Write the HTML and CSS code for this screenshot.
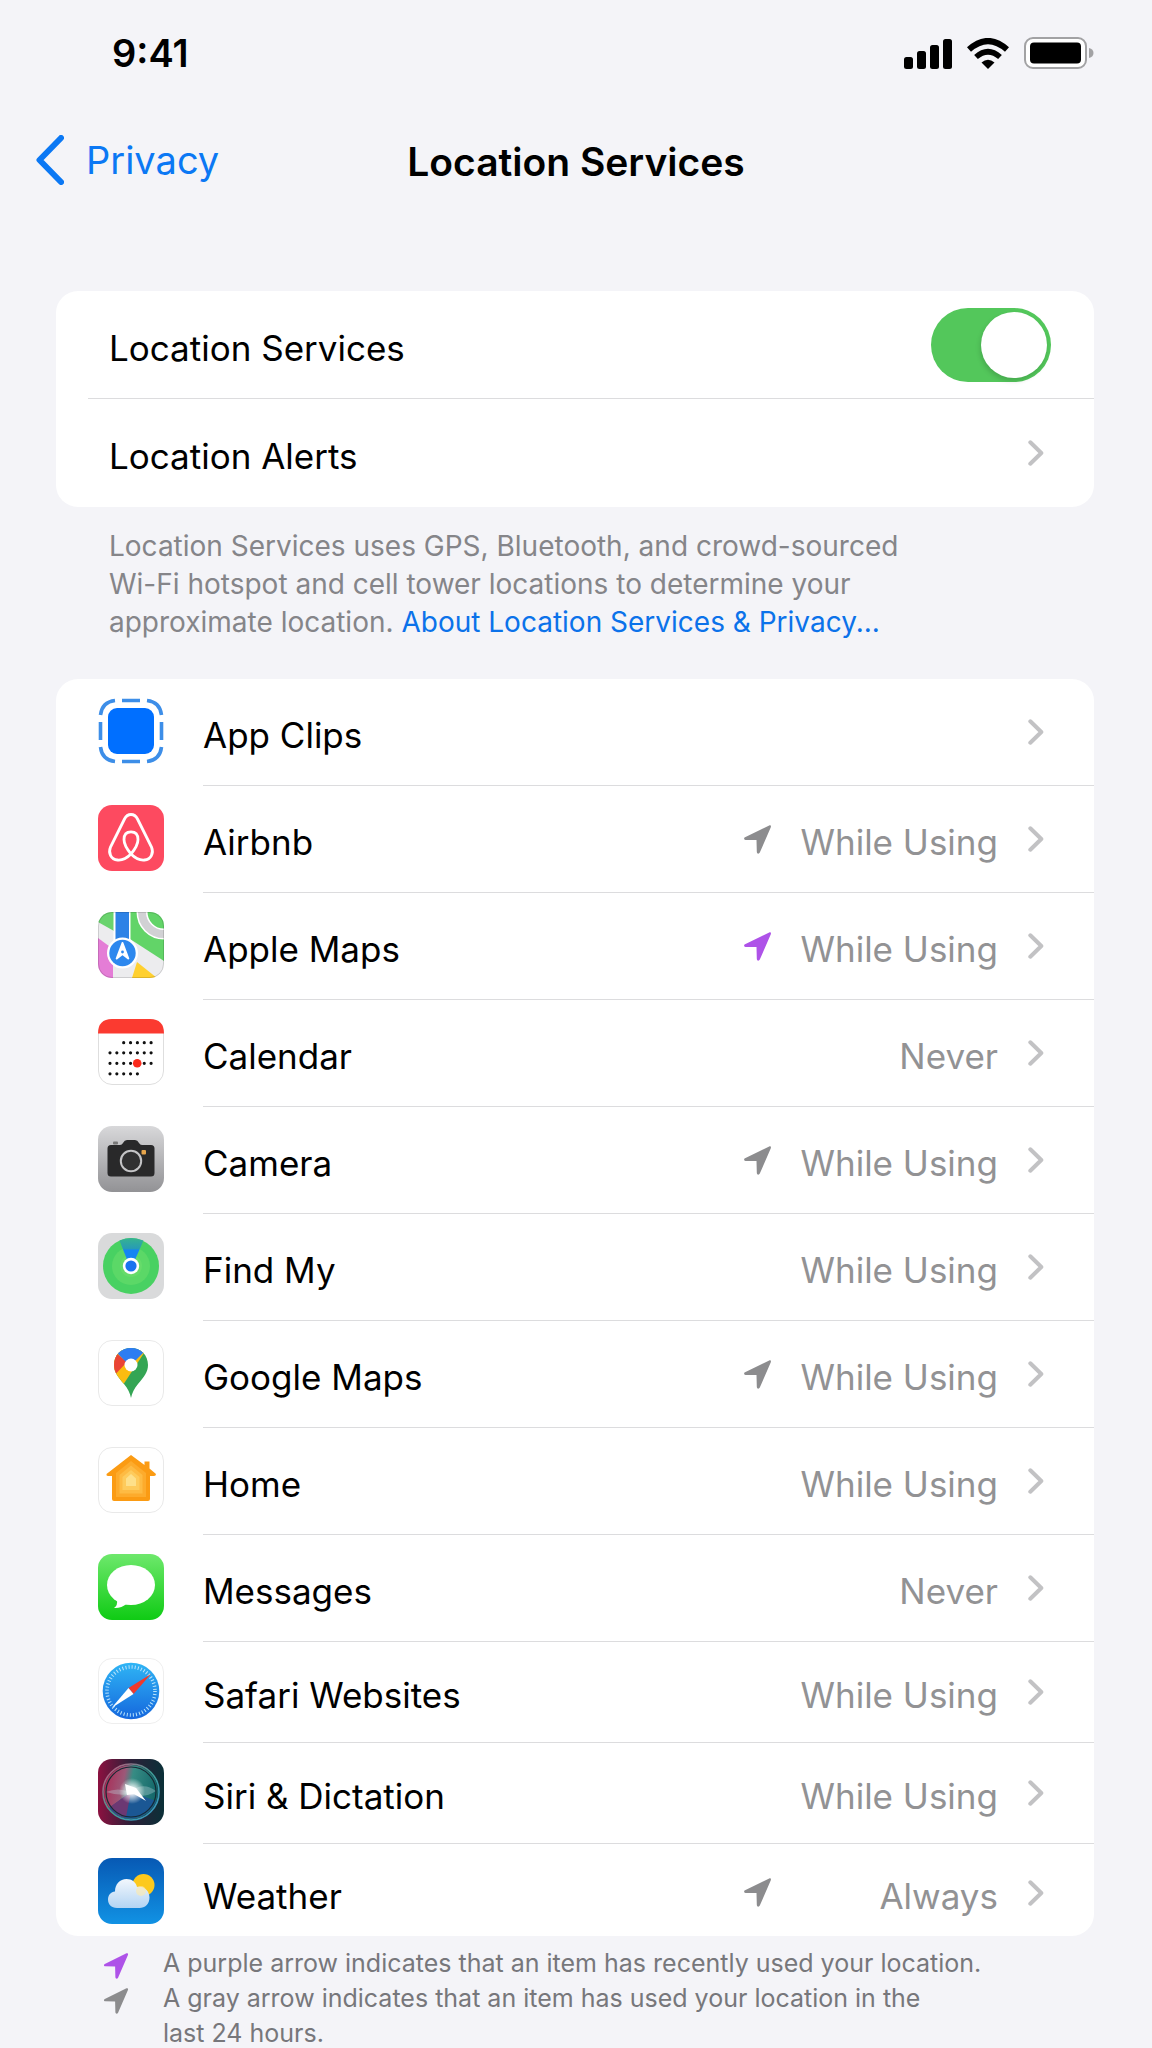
FILE: index.html
```html
<!DOCTYPE html>
<html lang="en">
<head>
    <meta charset="UTF-8">
    <meta name="viewport" content="width=device-width, initial-scale=1.0">
    <title>Location Services</title>
    <link rel="stylesheet" href="styles.css">
</head>
<body>

<!-- shared icons -->
<svg class="sprite" width="0" height="0" aria-hidden="true">
    <symbol id="chevron" viewBox="0 0 16 26">
        <path d="M2.3 2.3 L13.3 13 L2.3 23.7" fill="none" stroke="currentColor" stroke-width="4" stroke-linecap="round" stroke-linejoin="round"/>
    </symbol>
    <symbol id="arrow" viewBox="0 0 27 29">
        <path d="M25.2 .4 L1 12.2 C-.5 13 0 14.9 1.5 14.9 L12.5 15 L12.8 26.8 C12.9 29 15 29.2 15.8 27.5 L26.7 2.6 C27.4 .9 26.6 -.2 25.2 .4Z" fill="currentColor"/>
    </symbol>
</svg>

<div class="status-bar">
    <span class="time">9:41</span>
    <div class="status-icons">
        <svg width="48" height="31" viewBox="0 0 48 31">
            <rect x="0" y="19" width="9" height="12" rx="2.5"/>
            <rect x="13" y="13" width="9" height="18" rx="2.5"/>
            <rect x="26" y="7" width="9" height="24" rx="2.5"/>
            <rect x="39" y="1" width="9" height="30" rx="2.5"/>
        </svg>
        <svg width="42" height="31" viewBox="0 0 42 31">
            <path d="M2 11.5 Q21 -5.5 40 11.5" fill="none" stroke="#000" stroke-width="6"/>
            <path d="M9 19 Q21 8.5 33 19" fill="none" stroke="#000" stroke-width="5.6"/>
            <path d="M14.5 24.5 Q21 19 27.5 24.5 L21 31Z"/>
        </svg>
        <svg width="70" height="32" viewBox="0 0 70 32">
            <rect x="1" y="1" width="61" height="30" rx="8" fill="#fff" stroke="#a2a2a4" stroke-width="2"/>
            <rect x="6" y="5.5" width="51" height="21" rx="4"/>
            <path d="M65 11 Q69.5 12 69.5 16 Q69.5 20 65 21Z" fill="#a2a2a4"/>
        </svg>
    </div>
</div>

<nav class="nav-bar">
    <a class="back" href="#">
        <svg width="28" height="50" viewBox="0 0 28 50"><path d="M25 3 L3.5 25 L25 47" fill="none" stroke="currentColor" stroke-width="6" stroke-linecap="round" stroke-linejoin="round"/></svg>
        Privacy
    </a>
    <h1>Location Services</h1>
</nav>

<main>
    <div class="card settings">
        <div class="row">
            <div class="row-body">
                <label class="label" for="location">Location Services</label>
                <input type="checkbox" class="toggle" id="location" checked>
            </div>
        </div>
        <a class="row" href="#">
            <div class="row-body">
                <span class="label">Location Alerts</span>
                <svg class="chevron"><use href="#chevron"/></svg>
            </div>
        </a>
    </div>

    <p class="description">Location Services uses GPS, Bluetooth, and crowd-sourced Wi-Fi hotspot and cell tower locations to determine your approximate location. <a href="#">About Location Services &amp; Privacy...</a></p>

    <div class="card apps">
        <a class="row" href="#">
            <svg class="app-icon" viewBox="0 0 66 66">
                <rect x="10" y="10" width="46" height="46" rx="9" fill="#006fff"/>
                <g fill="none" stroke="#3d8ee8" stroke-width="3.6">
                    <path d="M2.5 17 Q4 4 17 2.5 M49 2.5 Q62 4 63.5 17 M63.5 49 Q62 62 49 63.5 M17 63.5 Q4 62 2.5 49"/>
                    <path d="M24 2.5 H42 M24 63.5 H42 M2.5 24 V42 M63.5 24 V42"/>
                </g>
            </svg>
            <div class="row-body">
                <span class="label">App Clips</span>
                <svg class="chevron"><use href="#chevron"/></svg>
            </div>
        </a>

        <a class="row" href="#">
            <svg class="app-icon" viewBox="0 0 66 66">
                <rect width="66" height="66" rx="14" fill="#fd4a60"/>
                <path d="M33 49 C28 54 24 55.5 19.5 55 C13 54.5 10 48 12.5 42 L26.5 14 C29.5 8 36.5 8 39.5 14 L53.5 42 C56 48 53 54.5 46.5 55 C42 55.5 38 54 33 49 C28 43 26 38 26 34.5 C26 29 29 26.8 33 26.8 C37 26.8 40 29 40 34.5 C40 38 38 43 33 49Z" fill="none" stroke="#fff" stroke-width="2.8"/>
            </svg>
            <div class="row-body">
                <span class="label">Airbnb</span>
                <svg class="arrow"><use href="#arrow"/></svg>
                <span class="value">While Using</span>
                <svg class="chevron"><use href="#chevron"/></svg>
            </div>
        </a>

        <a class="row" href="#">
            <svg class="app-icon" viewBox="0 0 66 66">
                <clipPath id="tile"><rect width="66" height="66" rx="14"/></clipPath>
                <g clip-path="url(#tile)">
                    <rect width="66" height="66" fill="#ececee"/>
                    <path d="M0 0 H16 V19 L0 10Z" fill="#69d36d"/>
                    <path d="M32 0 H66 V49 L32 27Z" fill="#62d468"/>
                    <path d="M0 26 L15 37 V66 H0Z" fill="#e47dd6"/>
                    <path d="M34 66 L39 50 L59 66Z" fill="#ffd02f"/>
                    <circle cx="66" cy="0" r="22" fill="none" stroke="#fff" stroke-width="11"/>
                    <circle cx="66" cy="0" r="22" fill="none" stroke="#d1d1d4" stroke-width="8"/>
                    <rect x="15.5" y="-2" width="17" height="34" fill="#fff"/>
                    <rect x="17.5" y="-2" width="13.5" height="34" fill="#2d82e6"/>
                    <circle cx="24.5" cy="41" r="15.5" fill="#fff"/>
                    <circle cx="24.5" cy="41" r="13.2" fill="#2d88ee"/>
                    <path d="M24.5 31 L18.7 46.5 L24.5 42 L30.3 46.5Z" fill="#fff" stroke="#fff" stroke-width="2" stroke-linejoin="round"/>
                    <circle cx="24.5" cy="40" r="1.4" fill="#2d88ee"/>
                </g>
                <rect x=".5" y=".5" width="65" height="65" rx="13.5" fill="none" stroke="#00000022"/>
            </svg>
            <div class="row-body">
                <span class="label">Apple Maps</span>
                <svg class="arrow purple"><use href="#arrow"/></svg>
                <span class="value">While Using</span>
                <svg class="chevron"><use href="#chevron"/></svg>
            </div>
        </a>

        <a class="row" href="#">
            <svg class="app-icon" viewBox="0 0 66 66">
                <rect x=".5" y=".5" width="65" height="65" rx="13.5" fill="#fff" stroke="#dedede"/>
                <path d="M0 14.5 Q0 0 14 0 H52 Q66 0 66 14.5Z" fill="#fb3a30"/>
                <g fill="none" stroke="#111" stroke-width="3.2" stroke-linecap="round" stroke-dasharray="0 6.85">
                    <path d="M25.7 23.7 H54"/>
                    <path d="M12 33.8 H54"/>
                    <path d="M12 44.3 H54"/>
                    <path d="M12 54.8 H40"/>
                </g>
                <circle cx="39.2" cy="44.3" r="4.3" fill="#fb2a1c"/>
            </svg>
            <div class="row-body">
                <span class="label">Calendar</span>
                <span class="value">Never</span>
                <svg class="chevron"><use href="#chevron"/></svg>
            </div>
        </a>

        <a class="row" href="#">
            <svg class="app-icon" viewBox="0 0 66 66">
                <linearGradient id="camera-bg" x2="0" y2="1"><stop stop-color="#d8d8da"/><stop offset="1" stop-color="#929295"/></linearGradient>
                <rect width="66" height="66" rx="14" fill="url(#camera-bg)"/>
                <rect x="15" y="15.5" width="5" height="3" rx="1" fill="#777"/>
                <path d="M13 19 H22 Q24 19 25 17 Q26.5 14 29 14 H37 Q39.5 14 41 17 Q42 19 44 19 H53 Q56.5 19 56.5 22.5 V47 Q56.5 50.5 53 50.5 H13 Q9.5 50.5 9.5 47 V22.5 Q9.5 19 13 19Z" fill="#29292a"/>
                <circle cx="33" cy="35" r="10.2" fill="#303031" stroke="#c4c4c6" stroke-width="2"/>
                <rect x="43.5" y="24" width="4.5" height="4.5" rx="1" fill="#e6a54c"/>
            </svg>
            <div class="row-body">
                <span class="label">Camera</span>
                <svg class="arrow"><use href="#arrow"/></svg>
                <span class="value">While Using</span>
                <svg class="chevron"><use href="#chevron"/></svg>
            </div>
        </a>

        <a class="row" href="#">
            <svg class="app-icon" viewBox="0 0 66 66">
                <linearGradient id="beam" x2="0" y2="1"><stop stop-color="#36b48f"/><stop offset=".45" stop-color="#279bb6"/><stop offset=".5" stop-color="#1485f2"/></linearGradient>
                <rect width="66" height="66" rx="14" fill="#d9dadb"/>
                <circle cx="33" cy="33" r="28" fill="#48d162"/>
                <circle cx="33" cy="33" r="19" fill="#5bd867"/>
                <circle cx="33" cy="33" r="11" fill="#66db6a"/>
                <path d="M21.5 7.5 Q33 2.5 45.5 7.5 L36 29 H30Z" fill="url(#beam)"/>
                <circle cx="33" cy="33" r="8.2" fill="#fff"/>
                <circle cx="33" cy="33" r="5.6" fill="#1a73f0"/>
            </svg>
            <div class="row-body">
                <span class="label">Find My</span>
                <span class="value">While Using</span>
                <svg class="chevron"><use href="#chevron"/></svg>
            </div>
        </a>

        <a class="row" href="#">
            <svg class="app-icon" viewBox="0 0 66 66">
                <clipPath id="pin"><path d="M33 58 C32 53 30 49 26 44 C20 37 16 32 16 25 C16 15 23 8 33 8 C43 8 50 15 50 25 C50 32 46 37 40 44 C36 49 34 53 33 58Z"/></clipPath>
                <rect x=".5" y=".5" width="65" height="65" rx="13.5" fill="#fff" stroke="#e9e9e9"/>
                <g clip-path="url(#pin)">
                    <rect width="66" height="66" fill="#34a554"/>
                    <path d="M48 10 L25 45 L10 45 L10 10Z" fill="#fbbc10"/>
                    <path d="M10 0 L18 13 L29 22 L14 38 H5Z" fill="#ea4435"/>
                    <path d="M18 12 L28 22 L33 25 L47 11 L33 0Z" fill="#2d7df2"/>
                </g>
                <circle cx="33" cy="25" r="6.5" fill="#fff"/>
            </svg>
            <div class="row-body">
                <span class="label">Google Maps</span>
                <svg class="arrow"><use href="#arrow"/></svg>
                <span class="value">While Using</span>
                <svg class="chevron"><use href="#chevron"/></svg>
            </div>
        </a>

        <a class="row" href="#">
            <svg class="app-icon" viewBox="0 0 66 66">
                <rect x=".5" y=".5" width="65" height="65" rx="13.5" fill="#fff" stroke="#e9e9e9"/>
                <path d="M33 8 L46.5 18 V14.5 H51.5 V21.5 L58 27 Q58 29 56 29 H52 V52 Q52 54 50 54 H16 Q14 54 14 52 V29 H10 Q8 29 8.5 27Z" fill="#fb9b13"/>
                <path d="M33 14 L48 26 V50 H18 V26Z" fill="#fdab2c"/>
                <path d="M33 18.5 L44.5 28 V46.5 H21.5 V28Z" fill="#febb43"/>
                <path d="M33 23 L41.5 30 V43 H24.5 V30Z" fill="#fecb5c"/>
                <path d="M33 27 L38 31.5 V39 H28 V31.5Z" fill="#fee08a"/>
            </svg>
            <div class="row-body">
                <span class="label">Home</span>
                <span class="value">While Using</span>
                <svg class="chevron"><use href="#chevron"/></svg>
            </div>
        </a>

        <a class="row" href="#">
            <svg class="app-icon" viewBox="0 0 66 66">
                <linearGradient id="messages-bg" x2="0" y2="1"><stop stop-color="#6ee86c"/><stop offset="1" stop-color="#0fcb14"/></linearGradient>
                <rect width="66" height="66" rx="14" fill="url(#messages-bg)"/>
                <ellipse cx="33" cy="31" rx="24" ry="20" fill="#fff"/>
                <path d="M19 46 Q20 51 16 54 Q23 54.5 29 49.5Z" fill="#fff"/>
            </svg>
            <div class="row-body">
                <span class="label">Messages</span>
                <span class="value">Never</span>
                <svg class="chevron"><use href="#chevron"/></svg>
            </div>
        </a>

        <a class="row short" href="#">
            <svg class="app-icon" viewBox="0 0 66 66">
                <linearGradient id="safari-bg" x2="0" y2="1"><stop stop-color="#2fb5f5"/><stop offset="1" stop-color="#1567dd"/></linearGradient>
                <rect x=".5" y=".5" width="65" height="65" rx="13.5" fill="#fff" stroke="#eee"/>
                <circle cx="33" cy="33" r="28.3" fill="url(#safari-bg)"/>
                <circle cx="33" cy="33" r="24" fill="none" stroke="#b9e3fb" stroke-width="3.6" stroke-dasharray="1 2.14"/>
                <path d="M53 16 L30.5 30 L35.5 36Z" fill="#f0392c"/>
                <path d="M13.5 50 L30.5 30 L35.5 36Z" fill="#fff"/>
            </svg>
            <div class="row-body">
                <span class="label">Safari Websites</span>
                <span class="value">While Using</span>
                <svg class="chevron"><use href="#chevron"/></svg>
            </div>
        </a>

        <a class="row short" href="#">
            <svg class="app-icon" viewBox="0 0 66 66">
                <linearGradient id="siri-bg"><stop stop-color="#8c1140"/><stop offset=".5" stop-color="#2c2038"/><stop offset="1" stop-color="#0b3038"/></linearGradient>
                <linearGradient id="siri-orb" x2="1" y2=".2"><stop stop-color="#ad2450"/><stop offset=".4" stop-color="#9c5878"/><stop offset=".55" stop-color="#378c84"/><stop offset="1" stop-color="#15696b"/></linearGradient>
                <radialGradient id="siri-glow"><stop stop-color="#fff"/><stop offset=".3" stop-color="#fff" stop-opacity=".8"/><stop offset="1" stop-color="#fff" stop-opacity="0"/></radialGradient>
                <linearGradient id="siri-ring" x2="1" y2="1"><stop stop-color="#d14b78"/><stop offset=".5" stop-color="#3f9e95"/><stop offset="1" stop-color="#3794cc"/></linearGradient>
                <rect width="66" height="66" rx="14" fill="url(#siri-bg)"/>
                <circle cx="33" cy="33" r="27" fill="url(#siri-orb)"/>
                <path d="M33 33 L11 49 Q22 62 38 59 Q52 56 58 42Z" fill="#1b5794"/>
                <path d="M33 33 L12 48 Q20 58 28 58Z" fill="#6c3873"/>
                <path d="M8 33 Q20 28 32 33 Q45 22 58 32 Q46 40 33 35 Q20 37 8 33Z" fill="#bdd7dc" opacity=".35"/>
                <circle cx="33" cy="33" r="28" fill="none" stroke="url(#siri-ring)" stroke-width="1.6"/>
                <circle cx="33" cy="33" r="25" fill="none" stroke="#162a34" stroke-width="1.2"/>
                <circle cx="34" cy="32" r="13" fill="url(#siri-glow)"/>
                <path d="M27 25 L38 29 L48 42 L36 35 L29 36Z" fill="#fff"/>
            </svg>
            <div class="row-body">
                <span class="label">Siri &amp; Dictation</span>
                <span class="value">While Using</span>
                <svg class="chevron"><use href="#chevron"/></svg>
            </div>
        </a>

        <a class="row last" href="#">
            <svg class="app-icon" viewBox="0 0 66 66">
                <linearGradient id="weather-bg" x2="0" y2="1"><stop stop-color="#0759b4"/><stop offset="1" stop-color="#1192e4"/></linearGradient>
                <linearGradient id="cloud" x2="0" y2="1"><stop stop-color="#f2f7fd"/><stop offset="1" stop-color="#b3d4f3"/></linearGradient>
                <rect width="66" height="66" rx="14" fill="url(#weather-bg)"/>
                <circle cx="45.5" cy="27" r="11" fill="#fdc91c"/>
                <path d="M19 50 C13 50 10 46 10 41.5 C10 37 13 34 17 33.5 C17 26 22 21 28.5 21 C34 21 38 24.5 39 29 C46 27.5 51.5 33 51.5 39.5 C51.5 46 47 50 41.5 50Z" fill="url(#cloud)"/>
                <circle cx="43" cy="33" r="5" fill="#ffe9a8" opacity=".6"/>
            </svg>
            <div class="row-body">
                <span class="label">Weather</span>
                <svg class="arrow"><use href="#arrow"/></svg>
                <span class="value">Always</span>
                <svg class="chevron"><use href="#chevron"/></svg>
            </div>
        </a>
    </div>

    <ul class="legend">
        <li>
            <svg class="arrow purple"><use href="#arrow"/></svg>
            <span>A purple arrow indicates that an item has recently used your location.</span>
        </li>
        <li>
            <svg class="arrow"><use href="#arrow"/></svg>
            <span>A gray arrow indicates that an item has used your location in the<br>last 24 hours.</span>
        </li>
    </ul>
</main>

</body>
</html>
```
FILE: styles.css
```css
* {
    box-sizing: border-box;
}

body {
    margin: 0;
    background-color: #f4f4f8;
    color: #000;
    font-family: Inter, "Liberation Sans", sans-serif;
    font-size: 35px;
}

a {
    color: #0b72ea;
    text-decoration: none;
}

.sprite {
    position: absolute;
}

.status-bar {
    display: flex;
    justify-content: space-between;
    align-items: center;
    height: 106px;
    padding: 0 58px 0 112px;
}

.time {
    font-size: 38px;
    font-weight: 600;
}

.status-icons {
    display: flex;
    align-items: center;
    gap: 15px;
}

.nav-bar {
    display: grid;
    grid-template-columns: 1fr auto 1fr;
    align-items: center;
    height: 108px;
    padding: 0 36px;
}

.back {
    display: flex;
    align-items: center;
    gap: 22px;
    color: #0b78f4;
    font-size: 38px;
}

h1 {
    margin: 0;
    padding-top: 2px;
    font-size: 39px;
    font-weight: 600;
}

main {
    padding: 77px 58px 0 56px;
}

.card {
    background-color: #fff;
    border-radius: 22px;
}

.row {
    display: flex;
    align-items: center;
    height: 107px;
    color: #000;
}

.row.short {
    height: 101px;
}

.row.last {
    height: 92px;
    padding-top: 5px;
}

.row-body {
    flex: 1;
    display: flex;
    align-items: center;
    height: 100%;
    padding-right: 50px;
    border-bottom: 1px solid #dcdcde;
}

.row:last-child .row-body {
    border-bottom: none;
}

/* text sits slightly under the middle of the row */
.label, .value {
    padding-top: 6px;
}

.label {
    flex: 1;
}

.value {
    min-width: 200px;
    margin: 0 30px 0 27px;
    color: #929294;
    text-align: right;
}

.settings .row {
    height: 108px;
    padding-left: 32px;
}

.settings .row-body {
    padding-left: 21px;
}

.apps .row {
    padding-left: 42px;
}

.app-icon {
    width: 66px;
    height: 66px;
    margin: 0 39px 3px 0;
}

.apps .row-body {
    min-width: 0;
}

.chevron {
    width: 16px;
    height: 26px;
    color: #c2c2c4;
}

.arrow {
    width: 27px;
    height: 29px;
    color: #8c8c8e;
}

.arrow.purple {
    color: #ae52e8;
}

.toggle {
    appearance: none;
    display: flex;
    align-items: center;
    width: 120px;
    height: 74px;
    margin: 0 -7px 0 0;
    padding: 4px;
    border-radius: 37px;
    background-color: #c9c9cc;
}

.toggle::before {
    content: "";
    width: 66px;
    height: 66px;
    border-radius: 50%;
    background-color: #fff;
    box-shadow: -1px 3px 5px rgba(0, 0, 0, 0.15);
}

.toggle:checked {
    justify-content: flex-end;
    background-color: #53c75b;
}

.description {
    max-width: 890px;
    margin: 0;
    padding: 20px 0 38px 53px;
    color: #858589;
    font-size: 28px;
    line-height: 38px;
}

.legend {
    margin: 0;
    padding: 10px 0 0 47px;
    color: #77777b;
    font-size: 25px;
    line-height: 35px;
    list-style: none;
}

.legend li {
    display: flex;
    gap: 34px;
}

.legend .arrow {
    width: 26px;
    height: 26px;
    margin-top: 7px;
}
```
